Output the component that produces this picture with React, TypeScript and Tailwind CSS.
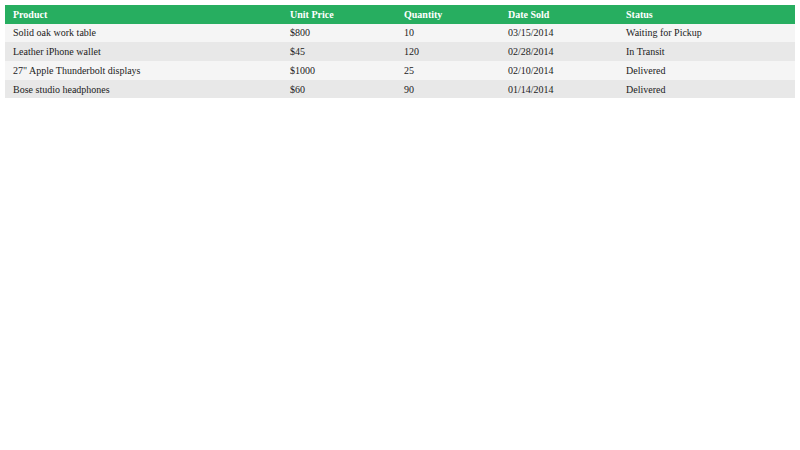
import React from "react";

const rows = [
  ["Solid oak work table", "$800", "10", "03/15/2014", "Waiting for Pickup"],
  ["Leather iPhone wallet", "$45", "120", "02/28/2014", "In Transit"],
  ['27" Apple Thunderbolt displays', "$1000", "25", "02/10/2014", "Delivered"],
  ["Bose studio headphones", "$60", "90", "01/14/2014", "Delivered"],
];

export default function App() {
  return (
    <div className="w-[800px] h-[450px] bg-white p-[5px]" style={{ fontFamily: '"Liberation Serif", serif' }}>
      <table className="w-[790px] border-collapse table-fixed text-[10px] text-[#222]">
        <colgroup>
          <col className="w-[277px]" />
          <col className="w-[114px]" />
          <col className="w-[104px]" />
          <col className="w-[118px]" />
          <col className="w-[177px]" />
        </colgroup>
        <thead>
          <tr className="bg-[#27ae60] text-white h-[18.6px]">
            <th className="text-left font-bold px-[8px] py-0">Product</th>
            <th className="text-left font-bold px-[8px] py-0">Unit Price</th>
            <th className="text-left font-bold px-[8px] py-0">Quantity</th>
            <th className="text-left font-bold px-[8px] py-0">Date Sold</th>
            <th className="text-left font-bold px-[8px] py-0">Status</th>
          </tr>
        </thead>
        <tbody>
          {rows.map((r, i) => (
            <tr key={i} className={i % 2 === 0 ? "bg-[#f5f5f5] h-[18.7px]" : "bg-[#e8e8e8] h-[18.7px]"}>
              {r.map((c, j) => (
                <td key={j} className="px-[8px] py-0">{c}</td>
              ))}
            </tr>
          ))}
        </tbody>
      </table>
    </div>
  );
}
